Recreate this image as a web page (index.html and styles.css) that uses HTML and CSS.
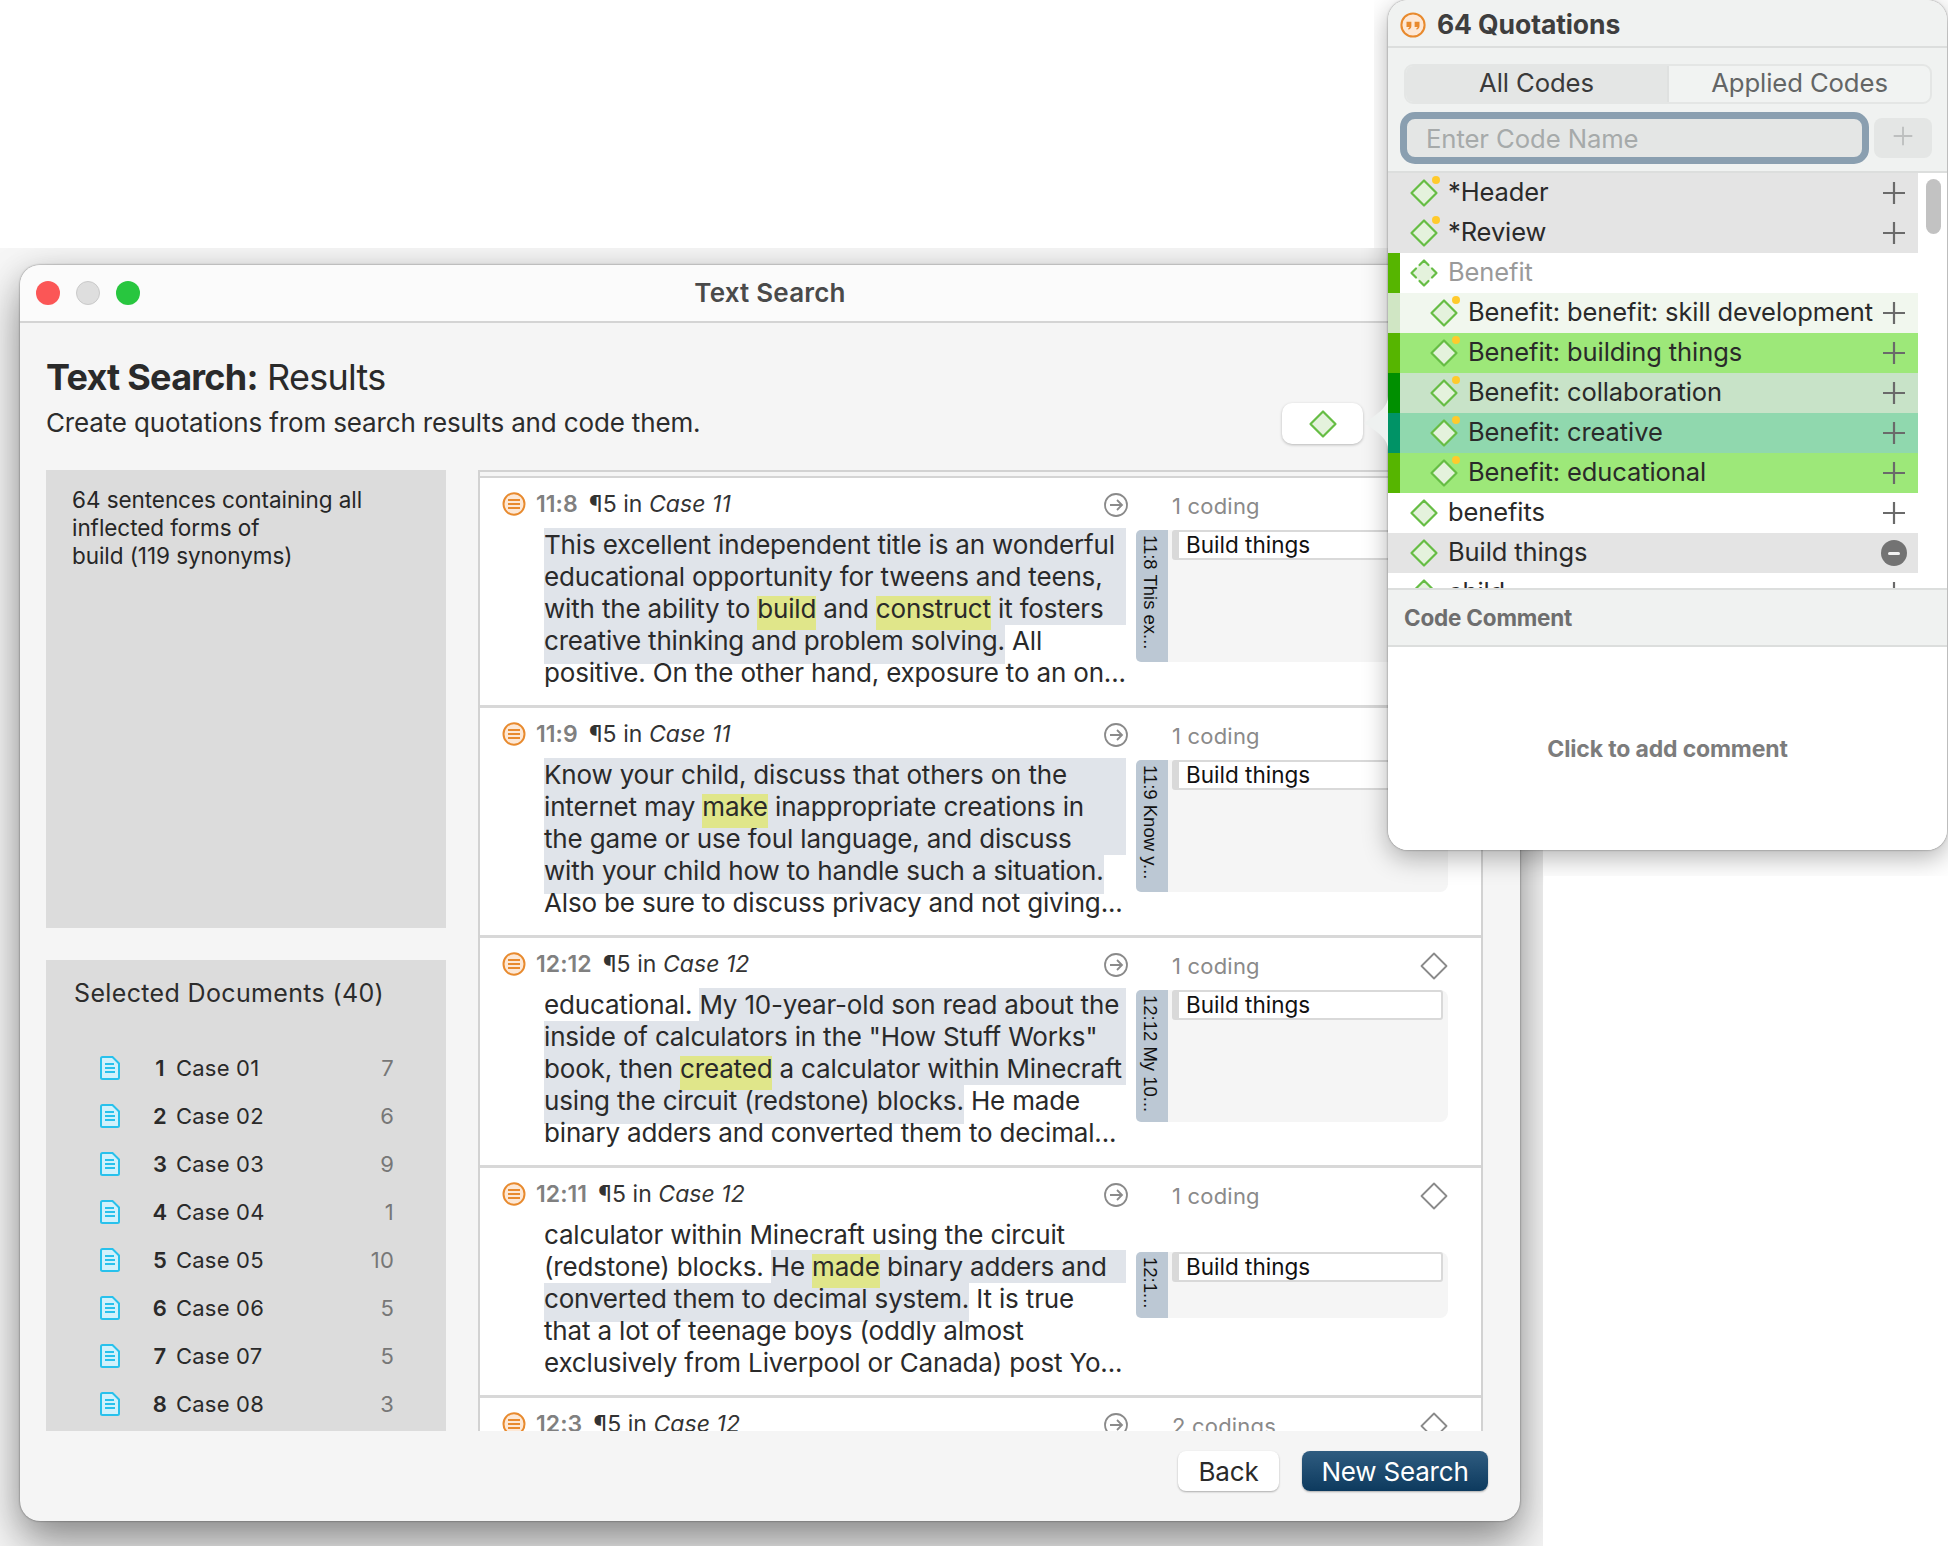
FILE: index.html
```html
<!DOCTYPE html>
<html lang="en">
<head>
<meta charset="utf-8">
<title>Text Search</title>
<link rel="stylesheet" href="styles.css">
</head>
<body>
<svg class="defs" width="0" height="0" aria-hidden="true">
  <defs>
    <symbol id="dia" viewBox="0 0 36 36"><path d="M18 5.500 30.500 18 18 30.500 5.500 18Z" fill="#e4f2dc" stroke="#66bd44" stroke-width="2.200" stroke-linejoin="round"/></symbol>
    <symbol id="dia-dot" viewBox="0 0 36 36"><path d="M18 5.500 30.500 18 18 30.500 5.500 18Z" fill="#e4f2dc" stroke="#66bd44" stroke-width="2.200" stroke-linejoin="round"/><circle cx="30" cy="5" r="4" fill="#ffca2c"/></symbol>
    <symbol id="dia-group" viewBox="0 0 36 36"><path d="M18 5.500 30.500 18 18 30.500 5.500 18Z" fill="#e4f2dc"/><path d="M13.500 10 18 5.500 22.500 10M26 13.500 30.500 18 26 22.500M22.500 26 18 30.500 13.500 26M10 22.500 5.500 18 10 13.500" fill="none" stroke="#66bd44" stroke-width="2.200" stroke-linejoin="round" stroke-linecap="round"/></symbol>
    <symbol id="plus" viewBox="0 0 26 26"><path d="M13 2v22M2 13h22" stroke="currentColor" stroke-width="2.200" fill="none"/></symbol>
    <symbol id="quote" viewBox="0 0 24 24"><ellipse cx="12" cy="12" rx="10.700" ry="10.700" fill="#fde8d6" stroke="#e88a2e" stroke-width="1.900"/><path d="M6 9h4.500v4c0 1.700-.9 2.800-2.500 3.400l-.6-1.200c.8-.3 1.200-.8 1.300-1.400H6ZM13.500 9H18v4c0 1.700-.9 2.800-2.500 3.400l-.6-1.200c.8-.3 1.200-.8 1.300-1.400h-2.700Z" fill="#e88a2e"/></symbol>
    <symbol id="lines" viewBox="0 0 24 24"><ellipse cx="12" cy="12" rx="10.500" ry="10.800" fill="#fde8d6" stroke="#e88a2e" stroke-width="2"/><path d="M6 8h12M6 12h12M6 16h12" stroke="#e88a2e" stroke-width="2"/></symbol>
    <symbol id="arrow" viewBox="0 0 26 26"><circle cx="13" cy="13" r="11" fill="none" stroke="#8a8a8a" stroke-width="1.800"/><path d="M7 13h12M14 8l5 5-5 5" fill="none" stroke="#8a8a8a" stroke-width="1.800"/></symbol>
    <symbol id="gray-dia" viewBox="0 0 30 30"><path d="M15 2.500 27.500 15 15 27.500 2.500 15Z" fill="#fff" stroke="#8a8a8a" stroke-width="1.800" stroke-linejoin="round"/></symbol>
    <symbol id="doc" viewBox="0 0 20 24"><path d="M2.500 1h10L19 7.500V21.500a1.500 1.500 0 0 1-1.500 1.500h-15A1.500 1.500 0 0 1 1 21.500V2.500A1.500 1.500 0 0 1 2.500 1Z" fill="#d2f1fb" stroke="#28c1ec" stroke-width="2"/><path d="M5 8h9M5 12h10M5 16h10" stroke="#28c1ec" stroke-width="1.800"/></symbol>
  </defs>
</svg>

<div class="scene">
  <div class="desk">
    <section class="window">
      <header class="titlebar">
        <div class="lights"><i class="light red"></i><i class="light gray"></i><i class="light green"></i></div>
        <div class="wintitle">Text Search</div>
      </header>
      <div class="content">
        <h1 class="head"><b>Text Search:</b> Results</h1>
        <p class="subtitle">Create quotations from search results and code them.</p>
        <div class="mainrow">
          <aside class="side">
            <div class="summary">64 sentences containing all<br>inflected forms of<br>build (119 synonyms)</div>
            <div class="docs">
              <h2 class="docs-title">Selected Documents (40)</h2>
              <ul class="doclist">
                <li class="doc"><svg class="docicon"><use href="#doc"/></svg><b>1</b><span class="docname">Case 01</span><span class="count">7</span></li>
                <li class="doc"><svg class="docicon"><use href="#doc"/></svg><b>2</b><span class="docname">Case 02</span><span class="count">6</span></li>
                <li class="doc"><svg class="docicon"><use href="#doc"/></svg><b>3</b><span class="docname">Case 03</span><span class="count">9</span></li>
                <li class="doc"><svg class="docicon"><use href="#doc"/></svg><b>4</b><span class="docname">Case 04</span><span class="count">1</span></li>
                <li class="doc"><svg class="docicon"><use href="#doc"/></svg><b>5</b><span class="docname">Case 05</span><span class="count">10</span></li>
                <li class="doc"><svg class="docicon"><use href="#doc"/></svg><b>6</b><span class="docname">Case 06</span><span class="count">5</span></li>
                <li class="doc"><svg class="docicon"><use href="#doc"/></svg><b>7</b><span class="docname">Case 07</span><span class="count">5</span></li>
                <li class="doc"><svg class="docicon"><use href="#doc"/></svg><b>8</b><span class="docname">Case 08</span><span class="count">3</span></li>
              </ul>
            </div>
          </aside>
          <div class="results">
            <div class="results-inner">
              <article class="item">
                <div class="ihead"><svg class="qicon"><use href="#lines"/></svg><span class="ilabel"><b>11:8</b><span class="para">¶5 in <em>Case 11</em></span></span><svg class="arrow"><use href="#arrow"/></svg><span class="ncode">1 coding</span><svg class="gdia"><use href="#gray-dia"/></svg></div>
                <div class="ibody">
                  <div class="itext">
                    <div class="ln"><span class="q fill first">This excellent independent title is an wonderful</span></div>
                    <div class="ln"><span class="q fill">educational opportunity for tweens and teens,</span></div>
                    <div class="ln"><span class="q fill">with the ability to <span class="y">build</span> and <span class="y">construct</span> it fosters</span></div>
                    <div class="ln"><span class="q last">creative thinking and problem solving.</span><span> All</span></div>
                    <div class="ln"><span>positive. On the other hand, exposure to an on...</span></div>
                  </div>
                  <div class="vbar"><span class="vtext">11:8 This ex...</span></div>
                  <div class="codes"><div class="tag">Build things</div></div>
                </div>
              </article>
              <article class="item">
                <div class="ihead"><svg class="qicon"><use href="#lines"/></svg><span class="ilabel"><b>11:9</b><span class="para">¶5 in <em>Case 11</em></span></span><svg class="arrow"><use href="#arrow"/></svg><span class="ncode">1 coding</span><svg class="gdia"><use href="#gray-dia"/></svg></div>
                <div class="ibody">
                  <div class="itext">
                    <div class="ln"><span class="q fill first">Know your child, discuss that others on the</span></div>
                    <div class="ln"><span class="q fill">internet may <span class="y">make</span> inappropriate creations in</span></div>
                    <div class="ln"><span class="q fill">the game or use foul language, and discuss</span></div>
                    <div class="ln"><span class="q last">with your child how to handle such a situation.</span></div>
                    <div class="ln"><span>Also be sure to discuss privacy and not giving...</span></div>
                  </div>
                  <div class="vbar"><span class="vtext">11:9 Know y...</span></div>
                  <div class="codes"><div class="tag">Build things</div></div>
                </div>
              </article>
              <article class="item">
                <div class="ihead"><svg class="qicon"><use href="#lines"/></svg><span class="ilabel"><b>12:12</b><span class="para">¶5 in <em>Case 12</em></span></span><svg class="arrow"><use href="#arrow"/></svg><span class="ncode">1 coding</span><svg class="gdia"><use href="#gray-dia"/></svg></div>
                <div class="ibody">
                  <div class="itext">
                    <div class="ln"><span>educational. </span><span class="q fill first">My 10-year-old son read about the</span></div>
                    <div class="ln"><span class="q fill">inside of calculators in the "How Stuff Works"</span></div>
                    <div class="ln"><span class="q fill">book, then <span class="y">created</span> a calculator within Minecraft</span></div>
                    <div class="ln"><span class="q last">using the circuit (redstone) blocks.</span><span> He made</span></div>
                    <div class="ln"><span>binary adders and converted them to decimal...</span></div>
                  </div>
                  <div class="vbar"><span class="vtext">12:12 My 10...</span></div>
                  <div class="codes"><div class="tag">Build things</div></div>
                </div>
              </article>
              <article class="item">
                <div class="ihead"><svg class="qicon"><use href="#lines"/></svg><span class="ilabel"><b>12:11</b><span class="para">¶5 in <em>Case 12</em></span></span><svg class="arrow"><use href="#arrow"/></svg><span class="ncode">1 coding</span><svg class="gdia"><use href="#gray-dia"/></svg></div>
                <div class="ibody low">
                  <div class="itext">
                    <div class="ln"><span>calculator within Minecraft using the circuit</span></div>
                    <div class="ln"><span>(redstone) blocks. </span><span class="q fill first">He <span class="y">made</span> binary adders and</span></div>
                    <div class="ln"><span class="q last">converted them to decimal system.</span><span> It is true</span></div>
                    <div class="ln"><span>that a lot of teenage boys (oddly almost</span></div>
                    <div class="ln"><span>exclusively from Liverpool or Canada) post Yo...</span></div>
                  </div>
                  <div class="vbar short"><span class="vtext">12:1...</span></div>
                  <div class="codes short"><div class="tag">Build things</div></div>
                </div>
              </article>
              <article class="item">
                <div class="ihead"><svg class="qicon"><use href="#lines"/></svg><span class="ilabel"><b>12:3</b><span class="para">¶5 in <em>Case 12</em></span></span><svg class="arrow"><use href="#arrow"/></svg><span class="ncode">2 codings</span><svg class="gdia"><use href="#gray-dia"/></svg></div>
              </article>
            </div>
          </div>
        </div>
        <div class="actions">
          <button class="btn">Back</button>
          <button class="btn primary">New Search</button>
        </div>
      </div>
    </section>
  </div>

  <div class="popclip">
    <div class="attach"><svg class="attach-dia"><use href="#dia"/></svg></div>
    <section class="popover">
      <header class="pophead"><svg class="popicon"><use href="#quote"/></svg><span>64 Quotations</span></header>
      <div class="tools">
        <div class="seg"><span class="segitem on">All Codes</span><span class="segitem">Applied Codes</span></div>
        <div class="inputrow">
          <div class="input">Enter Code Name</div>
          <div class="addbtn"><svg class="pl-add"><use href="#plus"/></svg></div>
        </div>
      </div>
      <div class="listwrap">
        <ul class="codelist">
          <li class="row sel"><svg class="cd"><use href="#dia-dot"/></svg><span class="cname">*Header</span><svg class="pl"><use href="#plus"/></svg></li>
          <li class="row sel"><svg class="cd"><use href="#dia-dot"/></svg><span class="cname">*Review</span><svg class="pl"><use href="#plus"/></svg></li>
          <li class="row s-green"><svg class="cd"><use href="#dia-group"/></svg><span class="cname dim">Benefit</span></li>
          <li class="row child c-pale"><svg class="cd"><use href="#dia-dot"/></svg><span class="cname">Benefit: benefit: skill development</span><svg class="pl"><use href="#plus"/></svg></li>
          <li class="row child c-lime"><svg class="cd"><use href="#dia-dot"/></svg><span class="cname">Benefit: building things</span><svg class="pl"><use href="#plus"/></svg></li>
          <li class="row child c-sage"><svg class="cd"><use href="#dia-dot"/></svg><span class="cname">Benefit: collaboration</span><svg class="pl"><use href="#plus"/></svg></li>
          <li class="row child c-teal"><svg class="cd"><use href="#dia-dot"/></svg><span class="cname">Benefit: creative</span><svg class="pl"><use href="#plus"/></svg></li>
          <li class="row child c-lime"><svg class="cd"><use href="#dia-dot"/></svg><span class="cname">Benefit: educational</span><svg class="pl"><use href="#plus"/></svg></li>
          <li class="row"><svg class="cd"><use href="#dia"/></svg><span class="cname">benefits</span><svg class="pl"><use href="#plus"/></svg></li>
          <li class="row sel"><svg class="cd"><use href="#dia"/></svg><span class="cname">Build things</span><i class="minus"></i></li>
          <li class="row"><svg class="cd"><use href="#dia"/></svg><span class="cname">child</span><svg class="pl"><use href="#plus"/></svg></li>
        </ul>
        <div class="scroll"><i class="thumb"></i></div>
      </div>
      <div class="cchead">Code Comment</div>
      <div class="ccbody">Click to add comment</div>
    </section>
    <svg class="notch" width="25" height="54" viewBox="0 0 25 54"><path d="M25 0C25 10 18 16 1 27 18 38 25 44 25 54Z" fill="#eef1f0"/></svg>
  </div>
</div>
</body>
</html>
```
FILE: styles.css
```css
* { box-sizing: border-box; }
html, body { margin: 0; padding: 0; background: #fff; }
body { font-family: Inter, "Noto Sans", sans-serif; color: #262626; }
ul { list-style: none; margin: 0; padding: 0; }
.defs { position: absolute; }
.scene { position: relative; width: 1948px; height: 1546px; overflow: hidden; background: #fff; }

/* desktop windows */
.desk { position: absolute; left: 0; top: 248px; width: 1543px; height: 1298px; overflow: hidden; background: #f6f6f6; padding: 17px 0 0 20px; }
.window { width: 1500px; height: 1256px; border-radius: 20px; background: #f5f5f5; box-shadow: 0 0 2px rgba(0,0,0,.55), 0 24px 46px rgba(0,0,0,.38), 0 4px 30px rgba(0,0,0,.12); display: flex; flex-direction: column; overflow: hidden; }
.titlebar { height: 58px; flex: none; display: flex; align-items: center; background: #fbfbfb; border-bottom: 2px solid #d4d4d4; padding: 0 0 0 16px; }
.lights { display: flex; gap: 16px; }
.light { width: 24px; height: 24px; border-radius: 50%; display: block; }
.red { background: #fb5656; }
.gray { background: #dedede; border: 1px solid #c9c9c9; }
.green { background: #28c63f; }
.wintitle { flex: 1; text-align: center; font-size: 26px; font-weight: 600; color: #4a4a4a; margin: -2px 0 0 -120px; letter-spacing: .2px; }

.content { flex: 1; padding: 0 0 0 26px; display: flex; flex-direction: column; min-height: 0; }
.head { margin: 32px 0 0; height: 44px; font-size: 36px; line-height: 44px; font-weight: 400; letter-spacing: -.75px; color: #2a2a2a; }
.head b { font-weight: 700; }
.subtitle { margin: 8px 0 0; height: 32px; font-size: 26px; line-height: 32px; letter-spacing: -.15px; color: #2c2c2c; }
.mainrow { display: flex; margin-top: 31px; height: 961px; }
.side { width: 400px; display: flex; flex-direction: column; gap: 32px; }
.summary { height: 458px; background: #dcdcdc; padding: 16px 26px; font-size: 22.500px; line-height: 28px; letter-spacing: -.06px; color: #262626; }
.docs { height: 471px; background: #dcdcdc; overflow: hidden; }
.docs-title { margin: 17px 0 0 28px; height: 32px; font-size: 25px; line-height: 32px; font-weight: 400; letter-spacing: .35px; color: #2c2c2c; }
.doclist { margin-top: 35px; }
.doc { height: 48px; display: flex; align-items: center; font-size: 22px; color: #2a2a2a; padding-left: 54px; letter-spacing: .2px; }
.docicon { width: 20px; height: 24px; flex: none; }
.doc b { width: 22px; margin-left: 29px; font-weight: 600; text-align: center; flex: none; }
.docname { margin-left: 5px; flex: 1; }
.count { width: 60px; margin-right: 52px; text-align: right; color: #777; }

.results { margin-left: 32px; width: 1005px; height: 961px; border: 2px solid #d2d2d2; background: #f5f5f5; padding-top: 4px; }
.results-inner { height: 955px; border-top: 2px solid #d4d4d4; background: #fff; overflow: hidden; }
.item { height: 230px; border-bottom: 3px solid #d8d8d8; background: #fff; }
.ihead { height: 52px; display: flex; align-items: center; padding: 6px 32px 0 22px; font-size: 23px; }
.qicon { width: 24px; height: 24px; flex: none; margin-top: -6px; }
.ilabel { flex: 1; margin-left: 10px; margin-top: -6px; color: #333; letter-spacing: .05px; }
.ilabel b { color: #808080; font-weight: 600; }
.para { margin-left: 11px; }
.arrow { width: 26px; height: 26px; flex: none; margin-top: -4px; }
.ncode { width: 247px; margin-left: 43px; margin-top: -3px; color: #8a8a8a; font-size: 22px; letter-spacing: .2px; }
.gdia { width: 30px; height: 30px; flex: none; margin-top: -2px; }

.ibody { display: flex; padding-left: 64px; align-items: flex-start; }
.itext { width: 582px; margin-top: -1px; font-size: 26px; line-height: 32px; letter-spacing: -.17px; color: #2a2a2a; flex: none; }
.ln { display: flex; height: 32px; white-space: pre; }
.q { background: #e0e4ea; height: 32px; }
.fill { flex: 1; }
.first { box-shadow: 0 -1px 0 #e0e4ea; }
.last { box-shadow: 0 7px 0 #e0e4ea; }
.y { position: relative; z-index: 0; display: inline-block; }
.y::before { content: ""; position: absolute; left: 0; right: 0; top: 3px; height: 34px; background: #e0e68a; z-index: -1; }
.vbar { width: 32px; height: 132px; margin-left: 10px; flex: none; background: #bcc8d4; border-radius: 5px 0 0 5px; padding: 5px 0 0 5px; overflow: hidden; }
.vtext { writing-mode: vertical-rl; font-family: "Liberation Sans", Arial, sans-serif; font-size: 18.500px; line-height: 18px; color: #111; white-space: nowrap; display: block; }
.codes { width: 280px; height: 132px; flex: none; background: #f5f5f5; border-radius: 0 8px 8px 0; padding-left: 4px; }
.tag { width: 271px; height: 30px; background: #fff; border: 2px solid #d9d9d9; border-left-width: 7px; border-radius: 3px; font-size: 22.500px; line-height: 25px; padding-left: 7px; color: #111; }
.low .vbar, .low .codes { margin-top: 32px; }
.vbar.short, .codes.short { height: 66px; }

.actions { display: flex; justify-content: flex-end; gap: 23px; padding-right: 32px; margin-top: 20px; }
.btn { height: 40px; border: 0; border-radius: 8px; background: #fff; box-shadow: 0 1px 2px rgba(0,0,0,.3); font-family: inherit; font-size: 26px; color: #2a2a2a; width: 101px; padding: 0; letter-spacing: -.2px; }
.primary { width: 186px; background: linear-gradient(#2f5c80, #0d3a5e); color: #fff; }

/* popover */
.popclip { position: absolute; left: 1374px; top: 0; right: 0; height: 876px; clip-path: polygon(0 0, 574px 0, 574px 876px, 170px 876px, 170px 960px, -200px 960px, -200px 248px, 0 248px); }
.popover { position: absolute; left: 14px; top: 0; width: 559px; height: 850px; border-radius: 20px; background: #fff; box-shadow: 0 0 2px rgba(0,0,0,.5), 0 8px 26px rgba(0,0,0,.3); overflow: hidden; }
.pophead { height: 48px; background: #f0f2f1; border-bottom: 2px solid #dcdedd; display: flex; align-items: center; padding: 2px 0 0 12px; font-size: 26.500px; font-weight: 700; color: #3e3e3e; letter-spacing: -.1px; }
.popicon { width: 26px; height: 26px; margin-right: 11px; margin-top: 2px; flex: none; }
.tools { height: 125px; background: #f0f2f1; padding: 16px 15px 0 16px; border-bottom: 2px solid #dcdedd; }
.seg { height: 40px; display: flex; border-radius: 9px; border: 2px solid #e4e6e5; background: #f1f3f2; font-size: 25.700px; overflow: hidden; }
.segitem { flex: 1; text-align: center; line-height: 34px; color: #636565; letter-spacing: -.1px; }
.segitem.on { background: #e4e6e5; color: #3a3a3a; border-right: 2px solid #dfe1e0; }
.inputrow { display: flex; align-items: flex-start; margin: 8px 0 0 -4px; }
.input { width: 469px; height: 52px; border: 7px solid #8a9fb0; border-radius: 15px; background: #e4e6e5; color: #a6aaaa; font-size: 25.700px; line-height: 39px; padding-left: 19px; letter-spacing: -.1px; }
.addbtn { width: 58px; height: 40px; margin: 6px 0 0 5px; background: #e4e6e5; border-radius: 8px; display: flex; align-items: center; justify-content: center; color: #bdbfbf; }
.pl-add { width: 22px; height: 22px; margin-top: -4px; }
.listwrap { height: 415px; display: flex; overflow: hidden; background: #fff; }
.codelist { width: 530px; flex: none; }
.scroll { flex: 1; padding: 6px 0 0 8px; }
.thumb { display: block; width: 15px; height: 55px; border-radius: 8px; background: #c2c2c2; }
.row { height: 40px; display: flex; align-items: center; border-left: 12px solid #fff; padding-left: 6px; padding-right: 11px; background: #fff; font-size: 25.500px; color: #2a2a2a; letter-spacing: -.1px; }
.cd { width: 36px; height: 36px; flex: none; }
.cname { flex: 1; margin-left: 6px; margin-top: -4px; white-space: nowrap; }
.dim { color: #9a9a9a; }
.pl { width: 26px; height: 26px; flex: none; color: #6a6a6a; }
.child { padding-left: 26px; }
.sel { background: #e4e4e4; border-left-color: #e4e4e4; }
.s-green { border-left-color: #56b500; }
.c-pale { background: #f1f7ee; border-left-color: #d0e6c4; }
.c-lime { background: #9de879; border-left-color: #56b500; }
.c-sage { background: #c8e3c8; border-left-color: #008f00; }
.c-teal { background: #90d8ae; border-left-color: #009366; }
.minus { width: 26px; height: 26px; flex: none; border-radius: 50%; background: #737373; display: flex; align-items: center; justify-content: center; }
.minus::before { content: ""; width: 12px; height: 3px; background: #f2f2f2; border-radius: 2px; }
.cchead { height: 59px; background: #f0f2f1; border-top: 2px solid #dcdedd; border-bottom: 2px solid #dcdedd; padding-left: 16px; font-size: 22.500px; line-height: 55px; font-weight: 700; color: #6e6e6e; letter-spacing: -.2px; }
.ccbody { height: 204px; display: flex; align-items: center; justify-content: center; font-size: 23px; font-weight: 700; color: #7c7c7c; letter-spacing: -.15px; background: #fff; }
.notch { position: absolute; left: -11px; top: 396px; }
.attach { position: absolute; left: -92px; top: 403px; width: 81px; height: 41px; border-radius: 10px; background: #fff; box-shadow: 0 1px 3px rgba(0,0,0,.25); display: flex; align-items: center; justify-content: center; }
.attach-dia { width: 36px; height: 36px; }
```
